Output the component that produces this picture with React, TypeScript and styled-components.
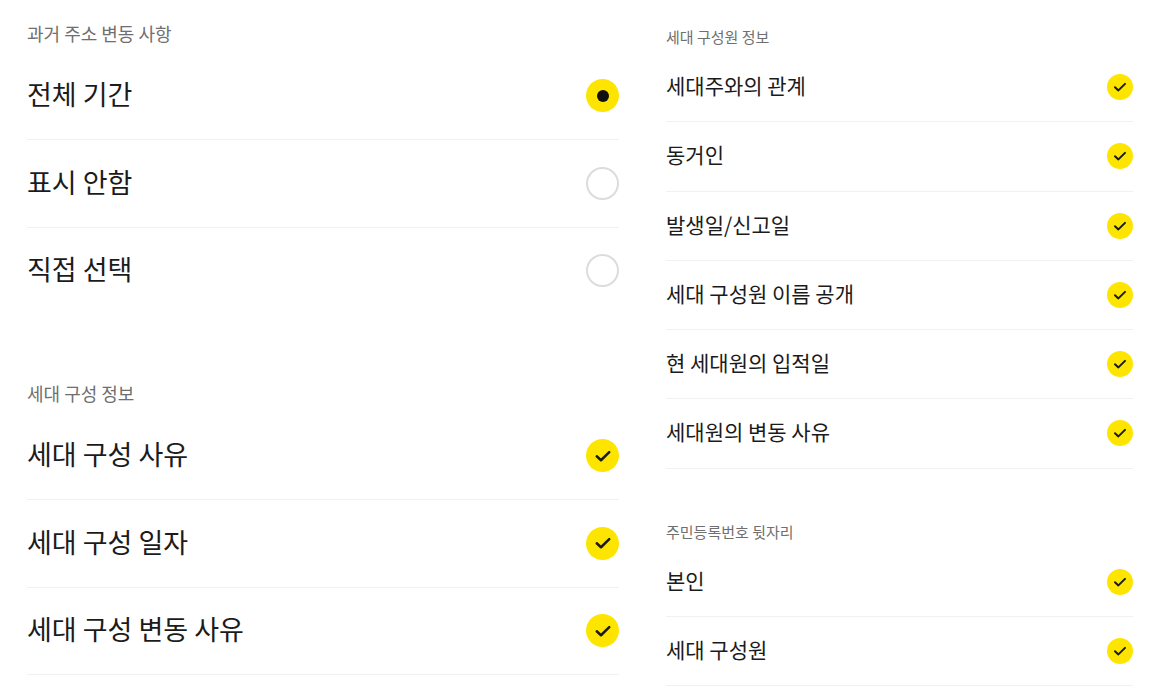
import React from "react";
import styled, { createGlobalStyle } from "styled-components";

const GlobalStyle = createGlobalStyle`
  html, body { margin: 0; padding: 0; background: #ffffff; }
  body { font-family: "Noto Sans CJK KR", "Noto Sans", sans-serif; color: #1e1e1e; }
`;

type Scale = "lg" | "sm";

const sizes = {
  lg: { header: 18, headerLine: 24, headerTop: 21, headerGap: 7.5, sectionGap: 66, text: 27, row: 87.5, icon: 33, check: 20, dot: 12 },
  sm: { header: 15, headerLine: 20, headerTop: 27, headerGap: 6, sectionGap: 53, text: 21, row: 69.25, icon: 26, check: 16, dot: 10 },
};

const Page = styled.div`
  display: flex;
  width: 1154px;
  height: 700px;
  overflow: hidden;
  background: #fff;
`;

const Panel = styled.div<{ $scale: Scale }>`
  display: flex;
  flex-direction: column;
  box-sizing: border-box;
  ${(p) =>
    p.$scale === "lg"
      ? `width: 646px; padding: 0 27px;`
      : `flex: 1; padding: 0 21px 0 20px;`}
`;

const Section = styled.section<{ $scale: Scale; $first?: boolean }>`
  display: flex;
  flex-direction: column;
  margin-top: ${(p) => (p.$first ? sizes[p.$scale].headerTop : sizes[p.$scale].sectionGap)}px;
`;

const SectionTitle = styled.div<{ $scale: Scale }>`
  font-size: ${(p) => sizes[p.$scale].header}px;
  line-height: ${(p) => sizes[p.$scale].headerLine}px;
  color: #6f6f6f;
  margin-bottom: ${(p) => sizes[p.$scale].headerGap}px;
`;

const Row = styled.div<{ $scale: Scale; $divider: boolean }>`
  display: flex;
  align-items: center;
  justify-content: space-between;
  box-sizing: border-box;
  height: ${(p) => sizes[p.$scale].row}px;
  border-bottom: ${(p) => (p.$divider ? "1px solid #f1f1f1" : "1px solid transparent")};
`;

const Label = styled.span<{ $scale: Scale }>`
  font-size: ${(p) => sizes[p.$scale].text}px;
  line-height: 1.2;
  color: #1b1b1b;
  margin-top: -3px;
`;

const Circle = styled.span<{ $scale: Scale; $on: boolean }>`
  display: flex;
  align-items: center;
  justify-content: center;
  box-sizing: border-box;
  width: ${(p) => sizes[p.$scale].icon}px;
  height: ${(p) => sizes[p.$scale].icon}px;
  border-radius: 50%;
  background: ${(p) => (p.$on ? "#fee500" : "#ffffff")};
  border: ${(p) => (p.$on ? "none" : "2px solid #dcdcdc")};
  flex-shrink: 0;
`;

const Dot = styled.span<{ $scale: Scale }>`
  width: ${(p) => sizes[p.$scale].dot}px;
  height: ${(p) => sizes[p.$scale].dot}px;
  border-radius: 50%;
  background: #111;
`;

const CheckMark = ({ scale }: { scale: Scale }) => {
  const s = sizes[scale].check;
  return (
    <svg width={s} height={s} viewBox="0 0 16 16" fill="none">
      <path d="M3 8.2 L6.4 11.4 L13 4.9" stroke="#1a1a1a" strokeWidth="2" strokeLinecap="round" strokeLinejoin="round" />
    </svg>
  );
};

type Item = { label: string; kind: "radio" | "check"; on: boolean };

const Group = ({ scale, title, items, first, lastDivider }: { scale: Scale; title: string; items: Item[]; first?: boolean; lastDivider: boolean }) => (
  <Section $scale={scale} $first={first}>
    <SectionTitle $scale={scale}>{title}</SectionTitle>
    {items.map((it, i) => (
      <Row key={it.label} $scale={scale} $divider={i < items.length - 1 || lastDivider}>
        <Label $scale={scale}>{it.label}</Label>
        <Circle $scale={scale} $on={it.on}>
          {it.on && (it.kind === "radio" ? <Dot $scale={scale} /> : <CheckMark scale={scale} />)}
        </Circle>
      </Row>
    ))}
  </Section>
);

export default function App() {
  return (
    <Page>
      <GlobalStyle />
      <Panel $scale="lg">
        <Group
          scale="lg"
          first
          title="과거 주소 변동 사항"
          lastDivider={false}
          items={[
            { label: "전체 기간", kind: "radio", on: true },
            { label: "표시 안함", kind: "radio", on: false },
            { label: "직접 선택", kind: "radio", on: false },
          ]}
        />
        <Group
          scale="lg"
          title="세대 구성 정보"
          lastDivider
          items={[
            { label: "세대 구성 사유", kind: "check", on: true },
            { label: "세대 구성 일자", kind: "check", on: true },
            { label: "세대 구성 변동 사유", kind: "check", on: true },
          ]}
        />
      </Panel>
      <Panel $scale="sm">
        <Group
          scale="sm"
          first
          title="세대 구성원 정보"
          lastDivider
          items={[
            { label: "세대주와의 관계", kind: "check", on: true },
            { label: "동거인", kind: "check", on: true },
            { label: "발생일/신고일", kind: "check", on: true },
            { label: "세대 구성원 이름 공개", kind: "check", on: true },
            { label: "현 세대원의 입적일", kind: "check", on: true },
            { label: "세대원의 변동 사유", kind: "check", on: true },
          ]}
        />
        <Group
          scale="sm"
          title="주민등록번호 뒷자리"
          lastDivider
          items={[
            { label: "본인", kind: "check", on: true },
            { label: "세대 구성원", kind: "check", on: true },
          ]}
        />
      </Panel>
    </Page>
  );
}
